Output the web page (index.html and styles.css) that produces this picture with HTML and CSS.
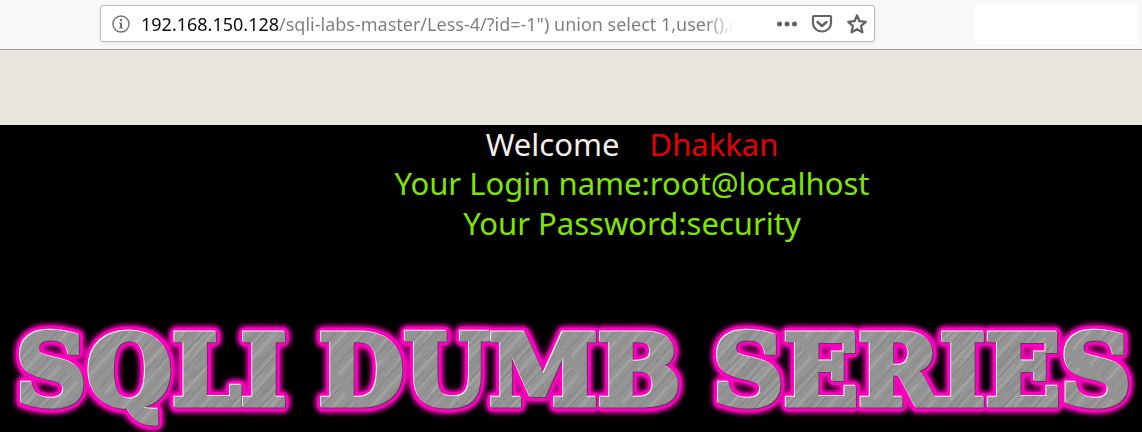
FILE: index.html
```html
<!DOCTYPE html>
<html lang="en">
<head>
  <meta charset="utf-8">
  <title>Less-4</title>
  <link rel="stylesheet" href="styles.css">
</head>
<body>

<header class="toolbar">
  <form class="address">
    <button class="icon" type="button" aria-label="Site information">
      <svg width="18" height="18" viewBox="0 0 18 18" fill="none" stroke="#737373">
        <circle cx="9" cy="9" r="8" stroke-width="1.4"/>
        <path d="M7 8h2v5M7 13h4" stroke-width="1.2"/>
        <path d="M9 8v5" stroke-width="2"/>
        <circle cx="9" cy="5" r="1.2" fill="#737373" stroke="none"/>
      </svg>
    </button>
    <input class="url" type="text" aria-label="Address" value="192.168.150.128/sqli-labs-master/Less-4/?id=-1&quot;) union select 1,user(),database()">
    <button class="icon" type="button" aria-label="Page actions">
      <svg width="22" height="22" viewBox="0 0 22 22" fill="#636363">
        <circle cx="3.5" cy="11" r="2.5"/><circle cx="11" cy="11" r="2.5"/><circle cx="18.5" cy="11" r="2.5"/>
      </svg>
    </button>
    <button class="icon" type="button" aria-label="Save to Pocket">
      <svg width="22" height="22" viewBox="0 0 22 22" fill="none" stroke="#636363" stroke-width="2.2" stroke-linecap="round" stroke-linejoin="round">
        <path d="M3 3h16q1 0 1 1v6a9 8.5 0 0 1-18 0V4q0-1 1-1z"/>
        <path d="M6.5 9l4.5 4 4.5-4" stroke-width="2.5"/>
      </svg>
    </button>
    <button class="icon" type="button" aria-label="Bookmark this page">
      <svg width="22" height="22" viewBox="0 0 22 22" fill="none" stroke="#636363" stroke-width="2.3" stroke-linejoin="round">
        <path d="M11 2.5l2.5 5.7 6.2.6-4.6 4.2 1.3 6.3L11 16.2l-5.4 3.1L6.9 13 2.3 8.8l6.2-.6z"/>
      </svg>
    </button>
  </form>
  <div class="blank"></div>
</header>

<div class="strip"></div>

<main>
  <div class="result">
    <p class="welcome">Welcome <span class="name">Dhakkan</span></p>
    <p>Your Login name:root@localhost</p>
    <p>Your Password:security</p>
  </div>

  <svg class="banner" viewBox="0 0 1142 132" role="img" aria-label="SQLI DUMB SERIES">
    <defs>
      <pattern id="metal" width="23" height="170" patternUnits="userSpaceOnUse" patternTransform="rotate(42)">
        <rect width="23" height="170" fill="#939493"/>
        <path d="M2 0v60M7 40v90M13 0v80M18 90v70" stroke="#9d9e9d" stroke-width="2"/>
        <path d="M4 0v90M10 100v60M15 30v80M21 0v60" stroke="#828583" stroke-width="1"/>
        <path d="M6 60v50M11 0v70M17 120v40" stroke="#adadab" stroke-width="1"/>
        <path d="M1 80v80M19 20v60" stroke="#8a8682" stroke-width="1"/>
      </pattern>
      <filter id="glow" x="-5%" y="-20%" width="110%" height="140%">
        <feGaussianBlur stdDeviation="2"/>
      </filter>
      <g id="words">
        <text x="16" y="93">SQLI</text>
        <text x="319" y="93">DUMB</text>
        <text x="713" y="93">SERIES</text>
      </g>
    </defs>
    <use href="#words" class="glow"/>
    <use href="#words" class="edge"/>
    <use href="#words" class="shade" x="1" y="1"/>
    <use href="#words" class="shine" x="-1" y="-1"/>
    <use href="#words" class="face"/>
  </svg>
</main>

</body>
</html>
```
FILE: styles.css
```css
body {
  margin: 0;
  background: #000;
  font-family: "Noto Sans", "Open Sans", sans-serif;
}
.toolbar {
  display: flex;
  align-items: flex-start;
  padding: 4px 4px 6px 100px;
  background: #f8f8f8;
  border-bottom: 1px solid #a0a0a0;
}
.address {
  display: flex;
  align-items: center;
  flex: 0 1 775px;
  box-sizing: border-box;
  height: 37px;
  margin: 1px 0;
  padding: 0 6px 0 11px;
  background: #fff;
  border: 1px solid #bcbcbc;
  border-radius: 3px;
  box-shadow: 0 1px 4px rgba(0, 0, 0, 0.08);
}
.icon {
  display: flex;
  margin: 0 0 0 13px;
  padding: 0;
  border: 0;
  background: none;
}
.icon:first-child {
  margin: 0;
}
.url {
  flex: 1;
  min-width: 0;
  margin: 0 28px 0 11px;
  padding: 0;
  border: 0;
  outline: 0;
  font: 18px/24px "Noto Sans", "Open Sans", sans-serif;
  color: transparent;
  /* host is dark, the rest is grey and fades out at the end */
  background: linear-gradient(to right, #0c0c0d 138px, #7d7d7d 138px, #7d7d7d calc(100% - 30px), transparent);
  -webkit-background-clip: text;
  background-clip: text;
}
.blank {
  flex: 0 1 163px;
  height: 39px;
  margin-left: auto;
  background: #fff;
}
.strip {
  height: 75px;
  background: #e9e6df;
}
.result {
  padding-left: 122px;
  font-size: 31px;
  line-height: 40px;
  text-align: center;
  color: #80e600;
}
.result p {
  margin: 0;
}
.result .welcome {
  line-height: 38px;
  color: #f2efe9;
}
.name {
  margin-left: 22px;
  color: #e60000;
}
.banner {
  display: block;
  width: 100%;
  margin-top: 69px;
  font-family: "DejaVu Serif", serif;
  font-weight: bold;
  font-size: 98px;
}
.glow {
  fill: #e000a8;
  stroke: #e000a8;
  stroke-width: 17px;
  stroke-linejoin: round;
  filter: url(#glow);
}
.edge {
  fill: #ff00c0;
  stroke: #ff00c0;
  stroke-width: 13px;
  stroke-linejoin: round;
}
.shade {
  fill: #54434f;
  stroke: #54434f;
  stroke-width: 5px;
}
.shine {
  fill: #f4eef2;
  stroke: #f4eef2;
  stroke-width: 5px;
}
.face {
  fill: url(#metal);
  stroke: url(#metal);
  stroke-width: 5px;
}
```
